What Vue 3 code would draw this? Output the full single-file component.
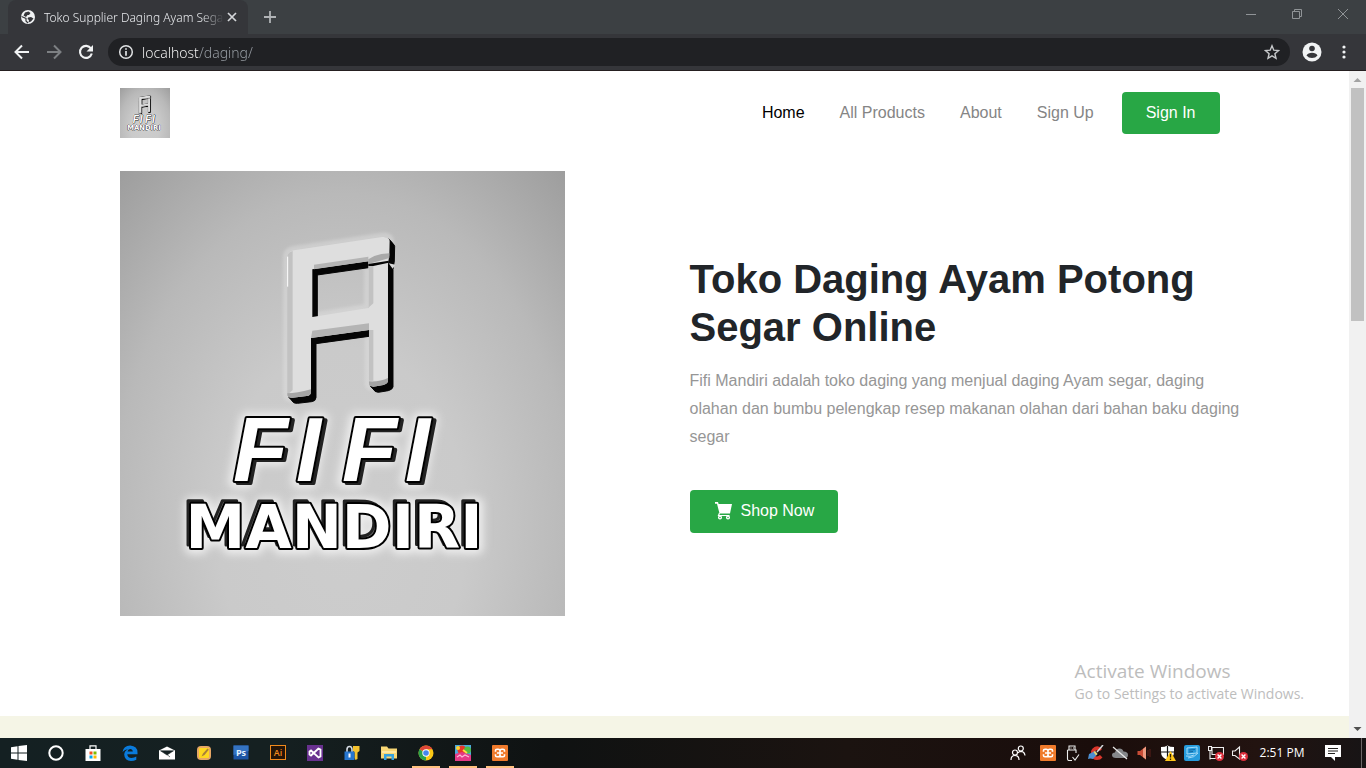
<script setup>
import { ref } from 'vue'

const address = ref('localhost/daging/')
const links = [
  { label: 'Home', active: true },
  { label: 'All Products' },
  { label: 'About' },
  { label: 'Sign Up' }
]
</script>

<template>
  <div class="desktop">
    <svg class="defs" aria-hidden="true">
      <defs>
        <radialGradient id="plate" cx="0" cy="0" r="1" gradientTransform="translate(.5 .8) scale(.8 1.15)">
          <stop offset="0" stop-color="#cdcdcd" />
          <stop offset="0.35" stop-color="#cacaca" />
          <stop offset="0.65" stop-color="#b9b9b9" />
          <stop offset="0.95" stop-color="#9c9c9c" />
        </radialGradient>
        <filter id="glow" x="-20%" y="-20%" width="140%" height="140%">
          <feGaussianBlur stdDeviation="4" />
        </filter>
        <path
          id="mono"
          fill-rule="evenodd"
          d="M82 108Q84 94 102 91L366 51Q386 49 389 62L388 106L384 132V484Q382 492 370 495L340 500Q328 500 327 490V330L153 354V516Q152 527 140 528L98 533Q82 534 82 522ZM157 148V291L325 264V124Z"
        />
        <symbol id="brand" viewBox="0 0 445 445">
          <rect width="445" height="445" fill="url(#plate)" />
          <g transform="translate(140 49) scale(.3333)">
            <use href="#mono" fill="#e4e4e4" stroke="#e4e4e4" stroke-width="26" filter="url(#glow)" opacity=".4" />
            <g fill="#060606" stroke="#060606" stroke-width="3" stroke-linejoin="round">
              <use href="#mono" x="15" y="17" />
              <use href="#mono" x="12" y="14" />
              <use href="#mono" x="9" y="10" />
              <use href="#mono" x="6" y="7" />
              <use href="#mono" x="3" y="4" />
            </g>
            <use href="#mono" fill="#dedede" />
            <path d="M82 108Q84 96 98 93V510L82 524Z" fill="#c2c2c2" />
            <path d="M82 520Q110 520 153 508V518Q152 527 140 528L98 533Q82 534 82 522Z" fill="#a5a5a5" />
            <path d="M327 484Q360 486 384 474V484Q382 492 370 495L340 500Q328 500 327 490Z" fill="#a5a5a5" />
            <path d="M157 332L327 310V330L153 354ZM162 134L325 110V124L162 148Z" fill="#b4b4b4" />
            <path d="M325 118Q350 100 388 100V114L360 122L325 132Z" fill="#a9a9a9" />
            <path d="M325 132L386 122V128L340 138H325Z" fill="#060606" />
            <path d="M386 130L406 134L398 146Z" fill="#d8d8d8" />
            <path d="M327 138H340V250L327 262ZM327 330H340V482H327Z" fill="#c2c2c2" />
            <path d="M83 110V200" stroke="#fff" stroke-width="3" />
          </g>
          <g font-family="'Liberation Sans Narrow', 'Liberation Sans', Arial, sans-serif" font-weight="700" font-style="italic" font-size="90" stroke-linejoin="round">
            <g fill="#eee" stroke="#eee" stroke-width="12" filter="url(#glow)">
              <text x="113" y="311">F</text><text x="176" y="311">I</text><text x="222" y="311">F</text><text x="285" y="311">I</text>
            </g>
            <g fill="#555" stroke="#222" stroke-width="4">
              <text x="116" y="312">F</text><text x="179" y="312">I</text><text x="225" y="312">F</text><text x="288" y="312">I</text>
            </g>
            <g fill="#fff" stroke="#000" stroke-width="4" paint-order="stroke">
              <text x="113" y="310">F</text><text x="176" y="310">I</text><text x="222" y="310">F</text><text x="285" y="310">I</text>
            </g>
          </g>
          <g font-family="'DejaVu Sans', Verdana, sans-serif" font-weight="700" font-size="60" text-anchor="middle" stroke-linejoin="round">
            <text x="214" y="377" fill="#eee" stroke="#eee" stroke-width="12" filter="url(#glow)">MANDIRI</text>
            <text x="211" y="374" fill="#777" stroke="#222" stroke-width="3">MANDIRI</text>
            <text x="214" y="377" fill="#fff" stroke="#000" stroke-width="4" paint-order="stroke">MANDIRI</text>
          </g>
        </symbol>
        <symbol id="xampp" viewBox="0 0 16 16">
          <rect width="16" height="16" rx="1" fill="#f07b2c" />
          <path d="M3.500 6.800V5.500Q3.500 4.200 5 4.200H6.200Q8 4.200 8 6V10Q8 11.800 6.200 11.800H5Q3.500 11.800 3.500 10.500V9.200M12.500 6.800V5.500Q12.500 4.200 11 4.200H9.800Q8 4.200 8 6V10Q8 11.800 9.800 11.800H11Q12.500 11.800 12.500 10.500V9.200M5 8H11" fill="none" stroke="#fff" stroke-width="1.600" />
        </symbol>
        <symbol id="cross" viewBox="0 0 8 8">
          <circle cx="4" cy="4" r="4" fill="#dc2f3c" />
          <path d="M2.300 2.300L5.700 5.700M5.700 2.300L2.300 5.700" stroke="#fff" stroke-width="1.200" />
        </symbol>
      </defs>
    </svg>

    <header class="tabstrip">
      <div class="tab">
        <svg class="i16" viewBox="0 0 16 16">
          <circle cx="8" cy="8" r="7" fill="#f1f3f4" />
          <path d="M5 3.500L8.500 2.500L10.500 4L9 6H7.500L6 8L3.500 6.500ZM8 8.500L11 8L13.500 9.500L11 12.500L8.500 13.500L9 11L7.500 10Z" fill="#35363a" />
          <path d="M1.500 7.500L6 9.500V12L8 14" stroke="#35363a" stroke-width="1.200" fill="none" />
        </svg>
        <span class="tab-title">Toko Supplier Daging Ayam Sega</span>
        <button class="bare" aria-label="Close tab">
          <svg class="i16" viewBox="0 0 16 16"><path d="M4 4L12 12M12 4L4 12" stroke="#d5d7da" stroke-width="1.700" /></svg>
        </button>
      </div>
      <button class="bare newtab" aria-label="New tab">
        <svg class="i16" viewBox="0 0 16 16"><path d="M8 2V14M2 8H14" stroke="#b0b3b6" stroke-width="1.800" /></svg>
      </button>
      <div class="window-controls">
        <button class="bare" aria-label="Minimize">
          <svg viewBox="0 0 10 10"><path d="M0 5.500H10" stroke="#909497" /></svg>
        </button>
        <button class="bare" aria-label="Restore">
          <svg viewBox="0 0 10 10"><path d="M.5 2.500H7.500V9.500H.5ZM2.500 2.500V.5H9.500V7.500H7.500" fill="none" stroke="#909497" /></svg>
        </button>
        <button class="bare" aria-label="Close">
          <svg viewBox="0 0 10 10"><path d="M0 0L10 10M10 0L0 10" stroke="#909497" /></svg>
        </button>
      </div>
    </header>

    <div class="toolbar">
      <button class="bare tool" aria-label="Back">
        <svg class="i16" viewBox="0 0 16 16"><path d="M15 8H2M8 1.500L1.500 8L8 14.500" fill="none" stroke="#f1f3f4" stroke-width="2" /></svg>
      </button>
      <button class="bare tool" aria-label="Forward">
        <svg class="i16" viewBox="0 0 16 16"><path d="M1 8H14M8 1.500L14.500 8L8 14.500" fill="none" stroke="#7d8083" stroke-width="2" /></svg>
      </button>
      <button class="bare tool" aria-label="Reload">
        <svg class="i16" viewBox="0 0 16 16"><path d="M13 4.500A6 6 0 1 0 13.800 9.500" fill="none" stroke="#f1f3f4" stroke-width="2.100" /><path d="M15 1V7.500H8.500Z" fill="#f1f3f4" /></svg>
      </button>
      <div class="omnibox">
        <svg class="i16" viewBox="0 0 16 16"><circle cx="8" cy="8" r="6.300" fill="none" stroke="#e0e2e4" stroke-width="1.500" /><path d="M8 7V11.800M8 4.200V5.800" stroke="#e0e2e4" stroke-width="1.700" /></svg>
        <input v-model="address" class="address" type="text" aria-label="Address" spellcheck="false" />
        <button class="bare" aria-label="Bookmark">
          <svg class="i16" viewBox="0 0 16 16"><path d="M8 1.800L9.800 6.200L14.500 6.600L10.900 9.700L12 14.300L8 11.800L4 14.300L5.100 9.700L1.500 6.600L6.200 6.200Z" fill="none" stroke="#c6c8ca" stroke-width="1.400" /></svg>
        </button>
      </div>
      <button class="bare profile" aria-label="Profile">
        <svg viewBox="0 0 20 20"><circle cx="10" cy="10" r="9.500" fill="#f1f3f4" /><circle cx="10" cy="6.500" r="2.800" fill="#35363a" /><path d="M4.500 13.500Q6 10.800 10 10.800T15.500 13.500Q13.500 16 10 16T4.500 13.500Z" fill="#35363a" /></svg>
      </button>
      <button class="bare menu" aria-label="Menu">
        <svg class="i16" viewBox="0 0 16 16" fill="#f1f3f4"><circle cx="8" cy="3" r="1.600" /><circle cx="8" cy="8" r="1.600" /><circle cx="8" cy="13" r="1.600" /></svg>
      </button>
    </div>

    <div class="viewport">
      <main class="page">
        <div class="container site-head">
          <a href="#" aria-label="Fifi Mandiri"><svg class="thumb"><use href="#brand" /></svg></a>
          <nav>
            <a v-for="link in links" :key="link.label" href="#" :class="{ active: link.active }">{{ link.label }}</a>
            <a class="btn signin" href="#">Sign In</a>
          </nav>
        </div>
        <section class="container hero">
          <svg class="poster" viewBox="0 0 445 445" role="img" aria-label="Fifi Mandiri"><use href="#brand" /></svg>
          <div class="copy">
            <h1>Toko Daging Ayam Potong Segar Online</h1>
            <p>Fifi Mandiri adalah toko daging yang menjual daging Ayam segar, daging olahan dan bumbu pelengkap resep makanan olahan dari bahan baku daging segar</p>
            <a class="btn shop" href="#">
              <svg viewBox="0 0 18 18" fill="#fff"><path d="M1 0H4L4.600 2H18L16 11.500H5.500L3 1.800H1Z" /><path d="M5.500 11L4.500 13.500H15.500" fill="none" stroke="#fff" stroke-width="1.200" /><circle cx="6" cy="15.500" r="1.400" fill="none" stroke="#fff" stroke-width="1.300" /><circle cx="14" cy="15.500" r="1.400" fill="none" stroke="#fff" stroke-width="1.300" /></svg>
              Shop Now
            </a>
          </div>
        </section>
        <section class="band"></section>
      </main>
      <div class="scrollbar">
        <svg viewBox="0 0 17 17"><path d="M4.500 11H12.500L8.500 7Z" fill="#a3a3a3" /></svg>
        <div class="thumb-bar"></div>
        <svg viewBox="0 0 17 17"><path d="M4.500 6H12.500L8.500 10Z" fill="#505050" /></svg>
      </div>
      <div class="watermark">
        <div class="wm-title">Activate Windows</div>
        <div class="wm-text">Go to Settings to activate Windows.</div>
      </div>
    </div>

    <footer class="taskbar">
      <button class="bare task" aria-label="Start">
        <svg class="i16" viewBox="0 0 16 16" fill="#fff"><path d="M0 2.200L6.500 1.300V7.500H0ZM7.500 1.100L16 0V7.500H7.500ZM0 8.500H6.500V14.700L0 13.800ZM7.500 8.500H16V16L7.500 14.900Z" /></svg>
      </button>
      <button class="bare task" aria-label="Cortana">
        <svg class="i16" viewBox="0 0 16 16"><circle cx="8" cy="8" r="6.700" fill="none" stroke="#fff" stroke-width="2" /></svg>
      </button>
      <button class="bare task" aria-label="Store">
        <svg class="i16" viewBox="0 0 16 16"><path d="M5 4V.8H11V4" fill="none" stroke="#fff" stroke-width="1.200" /><path d="M.5 4H15.500V16H.5Z" fill="#fff" /><path d="M4.500 6.500H7.500V9.500H4.500Z" fill="#f25022" /><path d="M8.500 6.500H11.500V9.500H8.500Z" fill="#7fba00" /><path d="M4.500 10.500H7.500V13.500H4.500Z" fill="#00a4ef" /><path d="M8.500 10.500H11.500V13.500H8.500Z" fill="#ffb900" /></svg>
      </button>
      <button class="bare task" aria-label="Edge">
        <svg class="i16" viewBox="0 0 16 16"><path d="M.5 7Q1.500 .5 8.200 .5Q15.500 1 15.500 7.500V9.300H5.300Q5.500 13 9.500 13Q12.300 13 14.300 11.600V14.700Q12 16 9 16Q2.500 15.700 2.200 9.500Q2.500 5.800 6 4.300Q2.800 4.500 .5 7ZM5.500 6.600H10.800Q10.600 3.900 8.200 3.900Q5.900 4.200 5.500 6.600Z" fill="#0a7bdc" fill-rule="evenodd" /></svg>
      </button>
      <button class="bare task" aria-label="Mail">
        <svg class="i16" viewBox="0 0 16 16"><path d="M0 5.500L8 1.500L16 5.500V14.500H0Z" fill="#fff" /><path d="M1.500 5.800H14.500L8 10ZM8 9.500L11 12" fill="#142022" stroke="#142022" stroke-width=".6" /></svg>
      </button>
      <button class="bare task" aria-label="Notes">
        <svg class="i16" viewBox="0 0 16 16"><rect x="1" y="1" width="14" height="14" rx="4" fill="#e7a765" /><rect x="3" y="3" width="10" height="10" rx="1" fill="#ffd81f" /><path d="M5.500 11.500L7 8.500L11.500 3.500L12.800 4.800L8.500 10Z" fill="#a8803a" /></svg>
      </button>
      <button class="bare task" aria-label="Photoshop">
        <svg class="i16" viewBox="0 0 16 16"><rect x=".5" y=".5" width="15" height="14" fill="#1c55a5" /><path d="M.5 .5H15.500V6L.5 10Z" fill="#3473c2" /><text x="8" y="11" text-anchor="middle" font-family="Open Sans, sans-serif" font-weight="700" font-size="9" fill="#e3f2ff">Ps</text></svg>
      </button>
      <button class="bare task" aria-label="Illustrator">
        <svg class="i16" viewBox="0 0 16 16"><rect x=".5" y=".5" width="15" height="14" fill="#241508" stroke="#f08a1c" /><text x="8" y="11" text-anchor="middle" font-family="Open Sans, sans-serif" font-weight="600" font-size="9" fill="#f08a1c">Ai</text></svg>
      </button>
      <button class="bare task" aria-label="Visual Studio">
        <svg class="i16" viewBox="0 0 16 16"><rect width="16" height="16" fill="#68318f" /><path d="M11.500 3.500L4 10.500L2.500 9.500V6.500L4 5.500L11.500 12.500L13.500 11.500V4.500Z" fill="none" stroke="#fff" stroke-width="1.800" /></svg>
      </button>
      <button class="bare task" aria-label="Password manager">
        <svg class="i16" viewBox="0 0 16 16"><path d="M3 7V4.500Q3 1.500 5.500 1.500T8 4.500V7" fill="none" stroke="#d5dce4" stroke-width="1.600" /><path d="M9 1H15.500V6L13.500 7.500V14L11.500 15L10.500 13V7.500L9 6Z" fill="#f4c22f" /><rect x=".5" y="6.500" width="10" height="8.500" fill="#2676cf" /><path d="M5.500 8.500V12.500" stroke="#fff" stroke-width="2" /></svg>
      </button>
      <button class="bare task" aria-label="File Explorer">
        <svg class="i16" viewBox="0 0 16 16"><path d="M0 1.500H6L7.500 3.500H16V13.500H0Z" fill="#f8d775" /><path d="M1 6H15V8H1Z" fill="#ffe9a2" /><path d="M3 15V9H13V15H10.500V11.500H5.500V15Z" fill="#35a2df" /></svg>
      </button>
      <button class="bare task open" aria-label="Chrome">
        <svg class="i16" viewBox="0 0 16 16"><circle cx="8" cy="8" r="7.500" fill="#fbc816" /><path d="M8 8L1.500 4.300A7.500 7.500 0 0 1 14.500 4.300H8Z" fill="#df4637" /><path d="M1.500 4.300L8 8.500L8 15.500A7.500 7.500 0 0 1 1.500 4.300Z" fill="#2ba14b" /><circle cx="8" cy="8" r="3.700" fill="#fff" /><circle cx="8" cy="8" r="2.800" fill="#4586ee" /></svg>
      </button>
      <button class="bare task open" aria-label="Candy game">
        <svg class="i16" viewBox="0 0 16 16"><rect width="16" height="16" fill="#4aa9db" /><circle cx="7" cy="5" r="4.500" fill="#e93527" /><circle cx="12.500" cy="5" r="3.500" fill="#53bb3f" /><path d="M0 9L7 7L16 10V16H0Z" fill="#e53a86" /><path d="M2 12L5 10L7 12L10 10L14 12" stroke="#ffb7d8" stroke-width="1.200" fill="none" /><circle cx="3" cy="3" r="2" fill="#ffd22d" /><path d="M8 5L12 8" stroke="#ffdd42" stroke-width="1.800" /></svg>
      </button>
      <button class="bare task open" aria-label="XAMPP">
        <svg class="i16"><use href="#xampp" /></svg>
      </button>

      <div class="tray">
        <button class="bare people" aria-label="People">
          <svg class="i16" viewBox="0 0 16 16" fill="none" stroke="#fff" stroke-width="1.200"><circle cx="5" cy="7.500" r="2.500" /><path d="M1 15Q1 10.500 5 10.500T9 15" /><circle cx="10.800" cy="3.500" r="2.500" /><path d="M8 8Q9 6.300 11 6.300Q14.500 6.500 15 10.500" /></svg>
        </button>
        <button class="bare" aria-label="XAMPP control panel"><svg class="i16"><use href="#xampp" /></svg></button>
        <button class="bare" aria-label="Eject media">
          <svg class="i16" viewBox="0 0 16 16" fill="none" stroke="#eee" stroke-width="1.100"><path d="M5 5V1H11V5M3.500 5H12V8M3.500 5V14Q3.500 15.500 5 15.500H8M6.500 3H7.500M9 3H10M8.500 12L11 15L15 9.500" /></svg>
        </button>
        <button class="bare" aria-label="CCleaner">
          <svg class="i16" viewBox="0 0 16 16"><path d="M14 4Q11 0 6.500 2Q2 4.500 3 10Q4 15 9 15Q12.500 15 14.500 12.500L12 10Q9 12.500 7 10.500Q5.500 7 8 5.500Q10 4.500 12 6Z" fill="#d9362b" /><path d="M15 0L9 7" stroke="#d3d7da" stroke-width="1.500" /><path d="M1 9L7 6L9.500 9L5 14Q2 13 0 14Z" fill="#4c8ed1" /><path d="M7 6L9.500 9L8 10.500L5.500 7Z" fill="#ead269" /></svg>
        </button>
        <button class="bare" aria-label="OneDrive">
          <svg class="i16" viewBox="0 0 16 16"><path d="M4 13Q0 13 0 10Q0 7.500 3 7.500Q4 3.500 7.500 3.500Q10.500 3.500 11.500 6.500Q16 6.500 16 10Q16 13 13 13Z" fill="#85878a" /><path d="M1 2L15 14" stroke="#e8e8e8" stroke-width="1.200" /></svg>
        </button>
        <button class="bare" aria-label="Audio manager">
          <svg class="i16" viewBox="0 0 16 16"><path d="M1.500 6H4L10 1.500V14.500L4 10H1.500Z" fill="#c84c36" /><path d="M7 4L10 1.500V14.500L7 12Z" fill="#ed9a80" /><path d="M12 5V11M14 4V12" stroke="#5c211b" /></svg>
        </button>
        <button class="bare" aria-label="Windows Security">
          <svg class="i16" viewBox="0 0 16 16"><path d="M1 2Q5 2 7.500 .5Q10 2 14 2V7Q14 12.500 7.500 15Q1 12.500 1 7Z" fill="#fff" /><path d="M7.500 1V15M1 7H14" stroke="#111" stroke-width="1.200" /><path d="M10.500 6L16 16H5Z" fill="#ffc61a" /><path d="M10.500 9V12.500M10.500 13.500V15" stroke="#322000" stroke-width="1.300" /></svg>
        </button>
        <button class="bare" aria-label="Graphics settings">
          <svg class="i16" viewBox="0 0 16 16"><rect width="16" height="16" rx="2" fill="#269bdc" /><path d="M3 3L13 2V8L3 9ZM4 13Q10 13 14 8M2 11Q6 12 10 10" fill="none" stroke="#a5dcfa" /><path d="M5 5L11 4.500M5 7L9 6.500" stroke="#15659f" /></svg>
        </button>
        <button class="bare" aria-label="Network">
          <svg class="i16" viewBox="0 0 16 16"><path d="M4 2.500H15.500V9.500H4ZM.5 1.500H3.500V5.500H.5ZM2 5.500V14.500M9 9.500V13M2 13.500H8" fill="none" stroke="#eee" stroke-width="1.100" /><use href="#cross" x="7" y="7" width="9" height="9" /></svg>
        </button>
        <button class="bare" aria-label="Volume">
          <svg class="i16" viewBox="0 0 16 16"><path d="M.5 6H3L7.500 2V14L3 10.500H.5Z" fill="none" stroke="#eee" stroke-width="1.100" /><use href="#cross" x="7" y="7" width="9" height="9" /></svg>
        </button>
        <time class="clock">2:51 PM</time>
        <button class="bare notes" aria-label="Notifications">
          <svg class="i16" viewBox="0 0 16 16"><path d="M0 0H16V12H10V16L6 12H0Z" fill="#fff" /><path d="M3 3.500H13M3 6H13M3 8.500H10" stroke="#22201e" /></svg>
        </button>
        <span class="peek"></span>
      </div>
    </footer>
  </div>
</template>

<style>
body { margin: 0; }
</style>

<style scoped>
.desktop {
  height: 100vh;
  display: flex;
  flex-direction: column;
  overflow: hidden;
  font-family: 'Liberation Sans', Arial, sans-serif;
  font-size: 16px;
}
svg { display: block; flex: none; }
.defs { width: 0; height: 0; position: absolute; }
.i16 { width: 16px; height: 16px; }
.bare {
  border: 0;
  padding: 0;
  background: none;
  display: flex;
  align-items: center;
  justify-content: center;
}
a { color: inherit; text-decoration: none; }

.tabstrip {
  display: flex;
  height: 34px;
  flex: none;
  background: #3c4043;
  padding-left: 8px;
}
.tab {
  display: flex;
  align-items: center;
  width: 220px;
  padding: 0 8px 0 12px;
  background: #35363a;
  border-radius: 8px 8px 0 0;
}
.tab-title {
  flex: 1;
  margin-left: 8px;
  white-space: nowrap;
  font-family: 'Noto Sans', sans-serif;
  font-size: 12px;
  font-weight: 300;
  color: #e8eaed;
  mask-image: linear-gradient(90deg, #000 88%, transparent);
}
.newtab { width: 44px; }
.window-controls { display: flex; margin-left: auto; height: 28px; }
.window-controls .bare { width: 46px; }
.window-controls svg { width: 10px; height: 10px; }

.toolbar {
  display: flex;
  align-items: center;
  height: 36px;
  flex: none;
  padding-left: 6px;
  background: #35363a;
  border-bottom: 1px solid #251f20;
}
.tool { width: 32px; height: 32px; }
.omnibox {
  flex: 1;
  height: 28px;
  margin-left: 6px;
  padding: 0 10px;
  display: flex;
  align-items: center;
  gap: 8px;
  border-radius: 14px;
  background: #202124;
}
.address {
  flex: 1;
  min-width: 0;
  border: 0;
  outline: 0;
  padding: 0;
  font-family: 'Noto Sans', sans-serif;
  font-size: 14px;
  font-weight: 300;
  color: transparent;
  background: linear-gradient(90deg, #fff 57px, #9aa0a6 57px);
  background-clip: text;
}
.profile { width: 44px; }
.profile svg { width: 20px; height: 20px; }
.menu { width: 20px; margin-right: 12px; }

.viewport {
  position: relative;
  flex: 1;
  min-height: 0;
  display: flex;
  background: #fff;
}
.page { flex: 1; min-width: 0; overflow: hidden; display: flex; flex-direction: column; }
.container {
  box-sizing: border-box;
  width: 100%;
  max-width: 1140px;
  margin: 0 auto;
  padding: 0 15px;
}
.site-head {
  display: flex;
  align-items: center;
  justify-content: space-between;
  padding-top: 17px;
  padding-bottom: 16px;
}
.thumb { width: 50px; height: 50px; }
nav { display: flex; align-items: center; gap: 35px; margin-right: 10px; color: #858585; }
nav .active { color: #000; }
.btn {
  display: inline-flex;
  align-items: center;
  height: 43px;
  padding: 0 24px;
  border-radius: 4px;
  background: #28a745;
  color: #fff;
}
nav .signin { height: 42px; margin-left: -7px; }
.hero {
  display: grid;
  grid-template-columns: minmax(0, 445fr) minmax(0, 555fr);
  align-items: center;
  column-gap: 125px;
  padding-top: 17px;
  padding-right: 0;
  padding-bottom: 100px;
}
.poster { width: 100%; height: auto; }
h1 { margin: 0 0 16px; font-size: 40px; line-height: 48px; font-weight: 700; color: #212529; }
p { margin: 0 0 39px; line-height: 28px; color: #969696; }
.shop { gap: 9px; }
.shop svg { width: 18px; height: 18px; }
.band { flex: 1; background: #f5f5e6; }

.scrollbar {
  width: 17px;
  display: flex;
  flex-direction: column;
  background: #f1f1f1;
}
.scrollbar svg { width: 17px; height: 17px; }
.scrollbar svg:last-child { margin-top: auto; }
.thumb-bar { height: 35%; margin: 0 2px; background: #c1c1c1; }

.watermark {
  position: absolute;
  right: 62px;
  bottom: 33px;
  font-family: 'Open Sans', 'Noto Sans', sans-serif;
  color: #bdbdbd;
  white-space: nowrap;
}
.wm-title { font-size: 19px; line-height: 24px; }
.wm-text { font-size: 14px; line-height: 22px; }

.taskbar {
  display: flex;
  height: 30px;
  flex: none;
  background: linear-gradient(90deg, #142022, #152021 20%, #0f1212 40%, #1b1310 62%, #1a0d0b 80%, #221310 92%, #171415);
}
.task { width: 37px; }
.task.open { background: linear-gradient(#ffc17f, #ffc17f) 50% 100% / 28px 2px no-repeat; }
.tray { display: flex; margin-left: auto; }
.tray .bare { width: 24px; }
.tray .people { width: 36px; }
.clock {
  width: 60px;
  line-height: 30px;
  text-align: center;
  color: #fff;
  font-family: 'Open Sans', 'Noto Sans', sans-serif;
  font-size: 12px;
}
.tray .notes { width: 42px; margin-right: 7px; }
.peek { width: 4px; border-left: 1px solid #6b6667; }
</style>
